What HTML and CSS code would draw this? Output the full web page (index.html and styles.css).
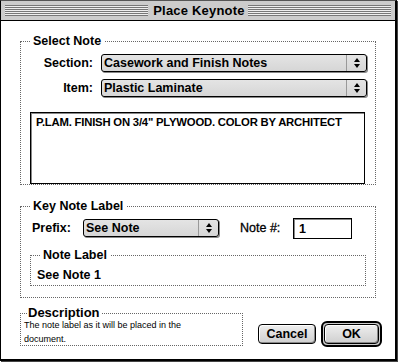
FILE: index.html
```html
<!DOCTYPE html>
<html lang="en">

<head>
  <meta charset="UTF-8">
  <title>Place Keynote</title>
  <link rel="stylesheet" href="styles.css">
</head>

<body>

  <div class="window">

    <div class="titlebar">
      <span class="title">Place Keynote</span>
    </div>

    <div class="content">

      <fieldset class="group select-note">
        <legend>Select Note</legend>

        <div class="row">
          <label class="lbl">Section:</label>
          <div class="popup wide">
            <span class="popup-text">Casework and Finish Notes</span>
            <span class="arrows"><i class="up"></i><i class="down"></i></span>
          </div>
        </div>

        <div class="row">
          <label class="lbl">Item:</label>
          <div class="popup wide">
            <span class="popup-text">Plastic Laminate</span>
            <span class="arrows"><i class="up"></i><i class="down"></i></span>
          </div>
        </div>

        <div class="notebox">P.LAM. FINISH ON 3/4" PLYWOOD. COLOR BY ARCHITECT</div>
      </fieldset>

      <fieldset class="group keynote">
        <legend>Key Note Label</legend>

        <div class="row prefix-row">
          <label class="lbl-left">Prefix:</label>
          <div class="popup small">
            <span class="popup-text">See Note</span>
            <span class="arrows"><i class="up"></i><i class="down"></i></span>
          </div>
          <label class="lbl-num">Note #:</label>
          <div class="field">1</div>
        </div>

        <fieldset class="group note-label">
          <legend>Note Label</legend>
          <div class="label-text">See Note 1</div>
        </fieldset>
      </fieldset>

      <div class="bottom">
        <fieldset class="group description">
          <legend>Description</legend>
          <p>The note label as it will be placed in the document.</p>
        </fieldset>

        <div class="buttons">
          <button class="btn cancel">Cancel</button>
          <span class="default-ring"><button class="btn ok">OK</button></span>
        </div>
      </div>

    </div>
  </div>

</body>

</html>
```

FILE: styles.css
```css
body {
  margin: 0;
  width: 400px;
  height: 363px;
  background-color: #ffffff;
  font-family: "Liberation Sans", Arial, sans-serif;
  font-weight: bold;
  font-size: 12.5px;
  color: #000;
  overflow: hidden;
}

.window {
  width: 394px;
  height: 358px;
  border-left: 1px solid #000;
  border-top: 1px solid #555;
  border-right: 2px solid #000;
  border-bottom: 2px solid #000;
  box-shadow: 1px 1px 0 #444;
  background-color: #fff;
}

/* title bar */
.titlebar {
  height: 19px;
  border-bottom: 1px solid #000;
  background-color: #cccccc;
  background-image: repeating-linear-gradient(to bottom, #777 0, #777 1px, #eee 1px, #eee 2px);
  background-size: calc(100% - 8px) 11px;
  background-position: 4px 4px;
  background-repeat: no-repeat;
  display: flex;
  justify-content: center;
  align-items: center;
}

.title {
  background-color: #cccccc;
  padding: 0 3px 0 5px;
  height: 19px;
  line-height: 20px;
  font-size: 13px;
  letter-spacing: 0.2px;
}

.content {
  padding: 14px 0 0 19px;
}

/* group boxes */
.group {
  margin: 0;
  padding: 0;
  border: 1px dotted #666;
  min-width: 0;
}

.group legend {
  padding: 0 3px;
  margin-left: 9px;
  line-height: 13px;
}

.select-note {
  width: 354px;
  height: 143px;
  padding-top: 5px;
}

.row {
  display: flex;
  align-items: center;
  height: 20px;
  margin-bottom: 5px;
}

.lbl {
  width: 72px;
  text-align: right;
  padding-right: 8px;
}

/* popup menu */
.popup {
  height: 16px;
  border: 1px solid #000;
  border-radius: 3px;
  background: linear-gradient(#e4e4e4, #d6d6d6);
  box-shadow: 1px 1px 0 #888;
  display: flex;
  align-items: center;
}

.popup.wide {
  width: 264px;
}

.popup.small {
  width: 134px;
}

.popup-text {
  flex: 1;
  padding-left: 2px;
  line-height: 16px;
  white-space: nowrap;
}

.arrows {
  width: 19px;
  height: 16px;
  border-left: 1px solid #999;
  display: flex;
  flex-direction: column;
  align-items: center;
  justify-content: center;
  gap: 2px;
}

.arrows i {
  width: 0;
  height: 0;
  border-left: 3px solid transparent;
  border-right: 3px solid transparent;
}

.arrows .up {
  border-bottom: 4px solid #000;
}

.arrows .down {
  border-top: 4px solid #000;
}

.notebox {
  margin: 14px 0 0 9px;
  width: 328px;
  height: 67px;
  border: 1px solid #000;
  box-shadow: inset 1px 1px 0 #888;
  padding: 3px 0 0 5px;
  font-size: 11.3px;
  letter-spacing: -0.2px;
}

.keynote {
  margin-top: 15px;
  width: 354px;
  height: 92px;
  padding-top: 4px;
}

.prefix-row {
  height: 22px;
  margin-bottom: 10px;
}

.lbl-left {
  padding-left: 11px;
  width: 51px;
}

.lbl-num {
  margin-left: 21px;
  width: 53px;
  font-weight: normal;
  -webkit-text-stroke: 0.3px #000;
}

.field {
  width: 52px;
  height: 19px;
  border: 1px solid #000;
  box-shadow: inset 1px 1px 0 #888;
  padding-left: 5px;
  line-height: 20px;
}

.note-label {
  margin-left: 9px;
  width: 334px;
  height: 35px;
}

.label-text {
  padding: 6px 0 0 6px;
}

/* bottom row */
.bottom {
  display: flex;
  align-items: flex-start;
  margin-top: 10px;
}

.description {
  width: 221px;
  height: 36px;
}

.description legend {
  margin-left: 6px;
  padding: 0 1px 0 1px;
  font-size: 13px;
  line-height: 10px;
}

.description p {
  margin: 0;
  padding: 0 30px 0 3px;
  font-family: "Liberation Sans", sans-serif;
  font-weight: normal;
  font-size: 9px;
  line-height: 14px;
  letter-spacing: 0;
}

.buttons {
  margin-left: 15px;
  margin-top: 13px;
  display: flex;
  align-items: center;
  gap: 5px;
}

.btn {
  font-family: "Liberation Sans", Arial, sans-serif;
  font-weight: bold;
  font-size: 12.5px;
  height: 20px;
  border: 1px solid #000;
  border-radius: 4px;
  background: linear-gradient(#eeeeee, #cfcfcf);
  box-shadow: inset -1px -1px 0 #888, inset 1px 1px 0 #fff;
  padding: 0;
  color: #000;
}

.cancel {
  width: 58px;
}

.default-ring {
  display: inline-block;
  border: 2px solid #000;
  border-radius: 6px;
  padding: 1px;
  background: #ccc;
}

.ok {
  width: 55px;
}
```
